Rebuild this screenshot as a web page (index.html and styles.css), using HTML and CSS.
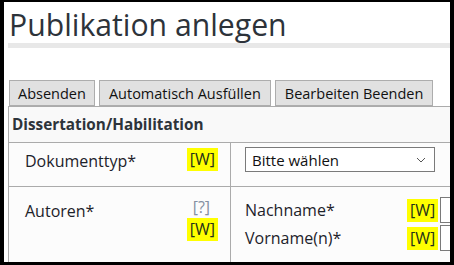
FILE: index.html
```html
<!DOCTYPE html>
<html lang="de">
<head>
<meta charset="utf-8">
<link rel="stylesheet" href="styles.css">
</head>
<body>
<div class="frame">
  <div class="page">
    <h1 class="title">Publikation anlegen</h1>
    <div class="rule"></div>
    <div class="toolbar">
      <button class="btn">Absenden</button>
      <button class="btn">Automatisch Ausfüllen</button>
      <button class="btn">Bearbeiten Beenden</button>
    </div>
    <div class="form">
      <div class="form-head">Dissertation/Habilitation</div>
      <div class="row row-doc">
        <div class="label-cell">
          <span class="label">Dokumenttyp*</span>
          <span class="hints"><span class="w">[W]</span></span>
        </div>
        <div class="field-cell">
          <div class="select">
            <span>Bitte wählen</span>
            <svg class="chev" width="10" height="6" viewBox="0 0 10 6"><path d="M1 1 L5 5 L9 1" fill="none" stroke="#555" stroke-width="1"/></svg>
          </div>
        </div>
      </div>
      <div class="row row-auth">
        <div class="label-cell">
          <span class="label">Autoren*</span>
          <span class="hints"><span class="q">[?]</span><span class="w">[W]</span></span>
        </div>
        <div class="field-cell sub">
          <div class="subrow"><span class="label">Nachname*</span><span class="w">[W]</span><span class="input"></span></div>
          <div class="subrow"><span class="label">Vorname(n)*</span><span class="w">[W]</span><span class="input"></span></div>
        </div>
      </div>
    </div>
  </div>
</div>
</body>
</html>
```

FILE: styles.css
```css
html, body {
  margin: 0;
  padding: 0;
  background: #fff;
}
.frame {
  width: 454px;
  height: 265px;
  box-sizing: border-box;
  border-style: solid;
  border-color: #000;
  border-width: 2px 4px 3px 4px;
  overflow: hidden;
  font-family: "Open Sans", "Noto Sans", sans-serif;
  color: #222;
}
.page {
  margin-left: 4px;
  width: 560px;
}
.title {
  margin: 0;
  padding: 4px 0 0 1px;
  height: 37px;
  font-size: 30.2px;
  font-weight: 400;
  line-height: 37px;
  color: #2d333a;
}
.rule {
  height: 5px;
  background: #e8e8e8;
}
.toolbar {
  display: flex;
  gap: 4px;
  margin-top: 32px;
  padding-left: 1px;
}
.btn {
  font-family: inherit;
  font-size: 14.5px;
  color: #111;
  background: #e1e1e1;
  border: 1px solid #adadad;
  height: 26px;
  padding: 0 8px;
  margin: 0;
}
.btn + .btn { padding: 0 9px; }
.form {
  border: 1px solid #ababab;
  border-right: none;
}
.form-head {
  height: 35px;
  line-height: 35px;
  background: #f9f9f9;
  font-weight: 700;
  font-size: 15.3px;
  color: #2d333a;
  padding-left: 3px;
  border-bottom: 1px solid #ababab;
}
.row {
  display: flex;
  background: #fcfcfc;
  border-bottom: 1px solid #ababab;
}
.label-cell {
  width: 222px;
  flex-shrink: 0;
  box-sizing: border-box;
  border-right: 1px solid #ababab;
  display: flex;
  justify-content: space-between;
  align-items: flex-start;
  padding: 0 12px 0 16px;
  font-size: 16px;
}
.row-doc {
  height: 44px;
  box-sizing: border-box;
}
.row-doc .label-cell { padding-top: 5px; }
.row-doc .label-cell .label { line-height: 23px; margin-top: 2px; }
.row-auth { height: 80px; }
.row-auth .label-cell { padding-top: 10px; }
.row-auth .label-cell .label { line-height: 22px; margin-top: 3px; }
.label { color: #1c222a; }
.hints {
  display: flex;
  flex-direction: column;
  align-items: center;
}
.w {
  background: #ffff00;
  color: #23301a;
  padding: 1px 3px;
  line-height: 21px;
  font-size: 16px;
}
.q {
  color: #8590a2;
  font-size: 16px;
  line-height: 21px;
  margin-right: 2px;
}
.field-cell {
  padding-left: 14px;
  padding-top: 4px;
  display: flex;
  align-items: flex-start;
}
.select {
  width: 190px;
  height: 25px;
  box-sizing: border-box;
  border: 1px solid #7a7a7a;
  background: #fff;
  display: flex;
  align-items: center;
  justify-content: space-between;
  padding: 0 8px 0 6px;
  font-size: 15px;
  color: #111;
}
.sub {
  flex-direction: column;
  align-items: flex-start;
  padding-top: 9px;
}
.subrow {
  display: flex;
  align-items: center;
  height: 28px;
  font-size: 16px;
}
.subrow .label { width: 162px; }
.subrow .w { margin-right: 2px; }
.subrow .input {
  width: 60px;
  height: 24px;
  border: 1px solid #7a7a7a;
  background: #fff;
}
```
